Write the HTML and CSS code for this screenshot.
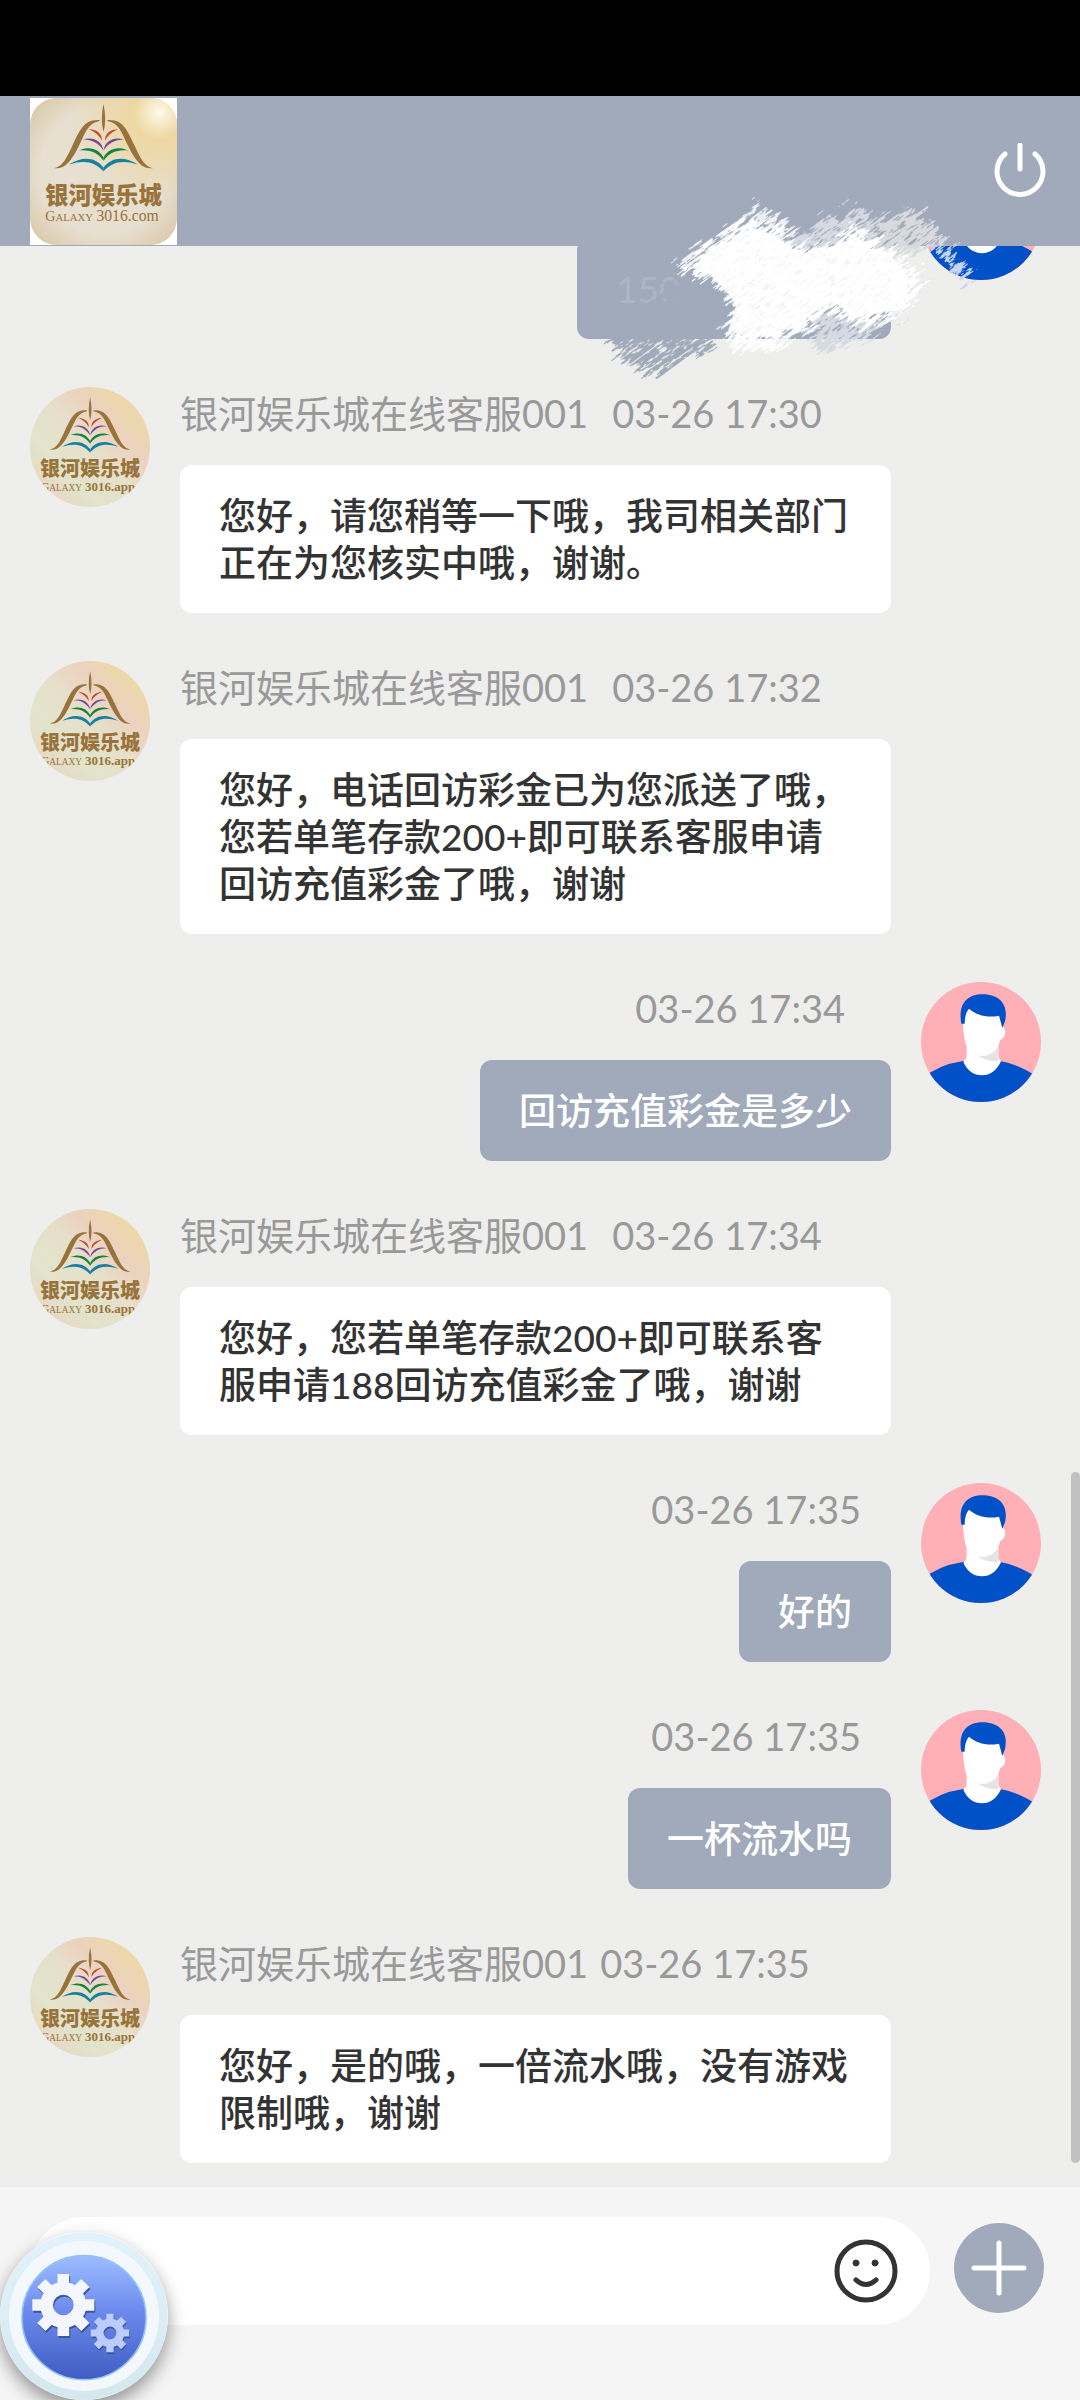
FILE: index.html
```html
<!DOCTYPE html>
<html lang="zh-CN">
<head>
    <meta charset="UTF-8">
    <title>银河娱乐城在线客服</title>
    <meta name="viewport" content="width=device-width, initial-scale=1.0">
    <link rel="stylesheet" href="styles.css">
</head>
<body>
    <!-- shared drawings -->
    <svg class="defs" aria-hidden="true">
        <defs>
            <linearGradient id="agent-bg" x1="0" y1="1" x2="1" y2="0">
                <stop offset="0" stop-color="#ecd0c0"/>
                <stop offset="0.3" stop-color="#e2e4cb"/>
                <stop offset="0.5" stop-color="#e6e0cb"/>
                <stop offset="0.68" stop-color="#ecd2be"/>
                <stop offset="0.85" stop-color="#ecd9a8"/>
                <stop offset="1" stop-color="#d8c090"/>
            </linearGradient>
            <g id="half-book">
                <path fill="#98743c" d="M208 66C160 62 148 100 128 140C108 184 98 204 72 210C104 214 122 190 144 148C166 104 172 76 208 69Z"/>
                <path fill="#c8492c" d="M176 93C200 95 216 106 215 128C207 112 196 103 176 93Z"/>
                <path fill="#77479a" d="M159 124C190 114 216 130 220 157C206 136 188 124 159 124Z"/>
                <path fill="#16823f" d="M146 157C182 142 208 156 220 178L220 188C204 166 184 154 146 157Z"/>
                <path fill="#15809f" d="M117 199C160 170 200 180 220 208L220 220C196 192 164 184 117 199Z"/>
            </g>
            <g id="book">
                <use href="#half-book"/>
                <use href="#half-book" transform="translate(440 0) scale(-1 1)"/>
                <path fill="#98743c" d="M220 17Q230 68 220 102Q210 68 220 17Z"/>
            </g>
            <symbol id="agent" viewBox="0 0 360 360">
                <rect width="360" height="360" fill="url(#agent-bg)"/>
                <use href="#book" transform="translate(0 16) scale(0.82)"/>
                <text class="brand" x="30" y="268" font-size="60">银河娱乐城</text>
                <text class="brand-latin" x="32" y="311" font-size="36">G<tspan font-size="28">ALAXY</tspan> <tspan font-size="39" font-weight="bold">3016.app</tspan></text>
            </symbol>
            <symbol id="visitor" viewBox="0 0 360 360">
                <rect width="360" height="360" fill="#ffafb6"/>
                <path fill="#0050c8" d="M0 292Q50 248 126 237H238Q300 248 360 292V360H0Z"/>
                <path fill="#fff" d="M137 180H232V226Q236 234 240 238Q220 280 183 280Q146 280 127 240Q137 232 137 222Z"/>
                <path fill="#e8e2e4" d="M232 196V238Q190 236 168 219Q206 222 232 196Z"/>
                <path fill="#fff" d="M127 100C136 76 160 70 184 70C216 70 240 84 242 134C256 134 258 166 238 174C230 206 208 222 184 222C156 222 136 204 131 174C127 150 124 120 127 100Z"/>
                <path fill="#0050c8" d="M121 125C110 64 140 37 184 37C232 37 264 64 252 118L244 137L234 101C200 108 166 100 144 80C134 92 132 104 131 125Z"/>
            </symbol>
            <g id="gear" stroke="currentColor" fill="none">
                <circle r="50" stroke-width="38"/>
                <path stroke-width="35" d="M0-60V-93M0 60V93M-60 0H-93M60 0H93M42-42L66-66M42 42L66 66M-42 42L-66 66M-42-42L-66-66"/>
            </g>
        </defs>
    </svg>

    <div class="status-bar"></div>

    <header class="header">
        <svg class="logo" viewBox="0 0 440 440" role="img" aria-label="银河娱乐城">
            <defs>
                <radialGradient id="logo-bg" r="0.72">
                    <stop offset="0.6" stop-color="#e7dfcf"/>
                    <stop offset="0.88" stop-color="#dccbae"/>
                    <stop offset="1" stop-color="#b99c76"/>
                </radialGradient>
                <radialGradient id="logo-shine" cx="0.88" cy="0.1" r="0.6">
                    <stop offset="0" stop-color="#fffbea"/>
                    <stop offset="0.3" stop-color="#eed79d" stop-opacity="0.9"/>
                    <stop offset="1" stop-color="#eed79d" stop-opacity="0"/>
                </radialGradient>
            </defs>
            <rect width="440" height="440" fill="#fff"/>
            <rect width="440" height="440" rx="80" fill="url(#logo-bg)"/>
            <rect width="440" height="440" rx="80" fill="url(#logo-shine)"/>
            <use href="#book"/>
            <text class="brand" x="45" y="318" font-size="70">银河娱乐城</text>
            <text class="brand-latin" x="46" y="368" font-size="42">G<tspan font-size="32">ALAXY</tspan> <tspan font-size="47">3016.com</tspan></text>
        </svg>
        <button class="power" type="button" aria-label="退出">
            <svg viewBox="0 0 56 56">
                <path d="M13 11A23 23 0 1 0 43 11M28 2V26"/>
            </svg>
        </button>

        <!-- brush over the phone number -->
        <svg class="brush" viewBox="0 0 1560 660" aria-hidden="true">
            <defs>
                <filter id="streaks" x="-10%" y="-10%" width="120%" height="120%">
                    <feTurbulence type="fractalNoise" baseFrequency="0.01 0.09" numOctaves="3" seed="4" result="n"/>
                    <feDisplacementMap in="SourceGraphic" in2="n" scale="110" xChannelSelector="R" yChannelSelector="A" result="d"/>
                    <feTurbulence type="fractalNoise" baseFrequency="0.03 0.16" numOctaves="3" seed="9"/>
                    <feColorMatrix values="0 0 0 0 0  0 0 0 0 0  0 0 0 0 0  0 9 0 0 -3" result="holes"/>
                    <feComposite in="d" in2="holes" operator="in"/>
                </filter>
            </defs>
            <g filter="url(#streaks)" transform="rotate(-36)">
                <g transform="rotate(36)">
                    <path fill="#a0aaba" d="M350 290L480 320L520 390L470 470L290 590L190 550L135 480Z"/>
                    <path fill="#d8dade" d="M900 145L1060 80L1160 185L1000 230Z"/>
                    <path fill="#c9d4ee" d="M1110 200L1180 200L1240 290L1200 300Z"/>
                    <path fill="#d6dae2" d="M680 190L900 70L980 190L1085 310L1070 370L960 445L800 530L700 440Z"/>
                    <path fill="#eef0f5" d="M340 250L600 80L700 150L760 240L640 300L440 290Z"/>
                </g>
            </g>
            <g filter="url(#streaks)" transform="rotate(-36)">
                <g transform="rotate(36)">
                    <path fill="#fff" d="M370 260L560 120L680 160L740 220L900 130L980 200L1080 280L1075 370L930 440L800 400L640 510L550 530L490 475L520 370L440 290Z"/>
                </g>
            </g>
            <path fill="#fff" opacity="0.86" d="M400 265L440 215L500 190L550 150L640 160L680 200L730 220L800 205L890 170L930 205L990 225L1045 290L1040 350L960 395L880 415L830 370L770 385L750 410L640 470L560 470L505 450L530 370L485 320L440 275Z"/>
        </svg>
    </header>

    <main class="chat">
        <div class="message mine">
            <svg class="avatar"><use href="#visitor"/></svg>
            <div class="content">
                <div class="meta"></div>
                <p class="bubble hidden-number">150<span>00000000</span></p>
            </div>
        </div>
        <div class="message">
            <svg class="avatar"><use href="#agent"/></svg>
            <div class="content">
                <div class="meta"><span>银河娱乐城在线客服001</span><time>03-26 17:30</time></div>
                <p class="bubble">您好，请您稍等一下哦，我司相关部门正在为您核实中哦，谢谢。</p>
            </div>
        </div>
        <div class="message">
            <svg class="avatar"><use href="#agent"/></svg>
            <div class="content">
                <div class="meta"><span>银河娱乐城在线客服001</span><time>03-26 17:32</time></div>
                <p class="bubble">您好，电话回访彩金已为您派送了哦，您若单笔存款200+即可联系客服申请回访充值彩金了哦，谢谢</p>
            </div>
        </div>
        <div class="message mine">
            <svg class="avatar"><use href="#visitor"/></svg>
            <div class="content">
                <div class="meta wide"><time>03-26 17:34</time></div>
                <p class="bubble">回访充值彩金是多少</p>
            </div>
        </div>
        <div class="message">
            <svg class="avatar"><use href="#agent"/></svg>
            <div class="content">
                <div class="meta"><span>银河娱乐城在线客服001</span><time>03-26 17:34</time></div>
                <p class="bubble">您好，您若单笔存款200+即可联系客服申请188回访充值彩金了哦，谢谢</p>
            </div>
        </div>
        <div class="message mine">
            <svg class="avatar"><use href="#visitor"/></svg>
            <div class="content">
                <div class="meta"><time>03-26 17:35</time></div>
                <p class="bubble">好的</p>
            </div>
        </div>
        <div class="message mine">
            <svg class="avatar"><use href="#visitor"/></svg>
            <div class="content">
                <div class="meta"><time>03-26 17:35</time></div>
                <p class="bubble">一杯流水吗</p>
            </div>
        </div>
        <div class="message">
            <svg class="avatar"><use href="#agent"/></svg>
            <div class="content">
                <div class="meta tight"><span>银河娱乐城在线客服001</span><time>03-26 17:35</time></div>
                <p class="bubble">您好，是的哦，一倍流水哦，没有游戏限制哦，谢谢</p>
            </div>
        </div>
        <div class="scrollbar"></div>
    </main>

    <footer class="composer">
        <div class="input-box">
            <input type="text" aria-label="消息">
            <button class="emoji" type="button" aria-label="表情">
                <svg viewBox="0 0 64 64">
                    <circle cx="32" cy="32" r="29"/>
                    <path d="M22 41Q32 50 42 41"/>
                    <circle class="eye" cx="22" cy="24" r="3"/>
                    <circle class="eye" cx="41" cy="24" r="3"/>
                </svg>
            </button>
        </div>
        <button class="plus" type="button" aria-label="更多">
            <svg viewBox="0 0 90 90"><path d="M20 45H70M45 20V70"/></svg>
        </button>
    </footer>

    <button class="assist" type="button" aria-label="设置">
        <svg viewBox="0 155 504 504">
            <defs>
                <linearGradient id="ball" x1="0" y1="0" x2="0" y2="1">
                    <stop offset="0" stop-color="#9dbdff"/>
                    <stop offset="0.45" stop-color="#6c8aee"/>
                    <stop offset="1" stop-color="#405cc0"/>
                </linearGradient>
                <linearGradient id="ring" x1="0" y1="0" x2="0" y2="1">
                    <stop offset="0" stop-color="#e2f2fc"/>
                    <stop offset="1" stop-color="#d5e8ee"/>
                </linearGradient>
            </defs>
            <circle cx="252" cy="407" r="251" fill="url(#ring)"/>
            <circle cx="252" cy="407" r="225" fill="#f3f8fc"/>
            <circle cx="252" cy="412" r="186" fill="url(#ball)" stroke="#8fc0fa" stroke-width="5"/>
            <use href="#gear" color="#3a5798" transform="translate(193 380)"/>
            <use href="#gear" color="#f4f6ff" transform="translate(190 374)"/>
            <use href="#gear" color="#3a5798" transform="translate(332 463) scale(0.62)"/>
            <use href="#gear" color="#bccdfd" transform="translate(330 458) scale(0.62)"/>
        </svg>
    </button>
</body>
</html>
```
FILE: styles.css
```css
* {
    box-sizing: border-box;
}
body {
    margin: 0;
    height: 100vh;
    display: flex;
    flex-direction: column;
    position: relative;
    overflow: hidden;
    background: #eeeeec;
    color: #333;
    font-family: Lato, "Noto Sans CJK SC", sans-serif;
}
button {
    padding: 0;
    border: none;
    background: none;
    cursor: pointer;
}
svg {
    display: block;
}
.defs {
    position: absolute;
    width: 0;
    height: 0;
}
.brand {
    font-family: "Noto Sans CJK SC", sans-serif;
    font-weight: 900;
    fill: #98743c;
}
.brand-latin {
    font-family: "Liberation Serif", serif;
    fill: #98743c;
}

/* top */
.status-bar {
    flex: none;
    height: 96px;
    background: #000;
}
.header {
    position: relative;
    z-index: 1;
    flex: none;
    display: flex;
    align-items: center;
    justify-content: space-between;
    height: 150px;
    padding: 0 32px 0 30px;
    background: #a0aaba;
}
.logo {
    width: 147px;
    height: 147px;
}
.power svg {
    width: 56px;
    height: 56px;
    fill: none;
    stroke: #fff;
    stroke-width: 5;
    stroke-linecap: round;
}
.brush {
    position: absolute;
    top: 84px;
    right: 0;
    width: 520px;
    height: 220px;
    pointer-events: none;
}

/* messages */
.chat {
    position: relative;
    flex: 1;
    min-height: 0;
    display: flex;
    flex-direction: column;
    justify-content: flex-end;
    gap: 48px;
    padding: 0 39px 24px 30px;
    overflow: hidden;
}
.message {
    flex: none;
    display: flex;
    gap: 30px;
}
.mine {
    flex-direction: row-reverse;
}
.avatar {
    flex: none;
    width: 120px;
    height: 120px;
    border-radius: 50%;
}
.content {
    display: flex;
    flex-direction: column;
    align-items: flex-start;
    gap: 26px;
    margin-right: 150px;
}
.mine .content {
    align-items: flex-end;
    margin: 0 0 0 150px;
}
.meta {
    display: flex;
    gap: 24px;
    height: 52px;
    line-height: 52px;
    font-size: 38px;
    color: #999;
}
.mine .meta {
    padding-right: 30px;
}
.mine .wide {
    padding-right: 46px;
}
.tight {
    gap: 12px;
}
.bubble {
    margin: 0;
    padding: 27px 39px;
    border-radius: 12px;
    background: #fff;
    font-size: 37px;
    font-weight: 500;
    line-height: 47px;
}
.mine .bubble {
    background: #a0aaba;
    color: #fff;
}
.mine .hidden-number {
    color: #acb5c4;
}
.hidden-number span {
    color: #a0aaba;
}
.scrollbar {
    position: absolute;
    right: 0;
    bottom: 24px;
    width: 9px;
    height: 35.6%;
    border-radius: 5px;
    background: #c1c1c1;
}

/* bottom */
.composer {
    flex: none;
    display: flex;
    align-items: flex-start;
    gap: 24px;
    height: 213px;
    padding: 30px 36px 0 30px;
    background: #f5f5f5;
}
.input-box {
    flex: 1;
    display: flex;
    align-items: center;
    height: 108px;
    padding: 0 32px 0 54px;
    border-radius: 54px;
    background: #fff;
}
.input-box input {
    flex: 1;
    min-width: 0;
    border: none;
    outline: none;
    background: none;
    font-size: 37px;
}
.emoji svg {
    width: 64px;
    height: 64px;
    fill: none;
    stroke: #333;
    stroke-width: 5;
    stroke-linecap: round;
}
.emoji .eye {
    fill: #333;
    stroke-width: 1;
}
.plus {
    margin-top: 6px;
    border-radius: 50%;
    background: #a0aaba;
}
.plus svg {
    width: 90px;
    height: 90px;
    stroke: #fff;
    stroke-width: 5;
    stroke-linecap: round;
}
.assist {
    position: absolute;
    left: 0;
    bottom: 0;
    z-index: 2;
    border-radius: 50%;
    box-shadow: 0 8px 18px rgba(0, 0, 0, 0.4);
}
.assist svg {
    width: 168px;
    height: 168px;
}
```
